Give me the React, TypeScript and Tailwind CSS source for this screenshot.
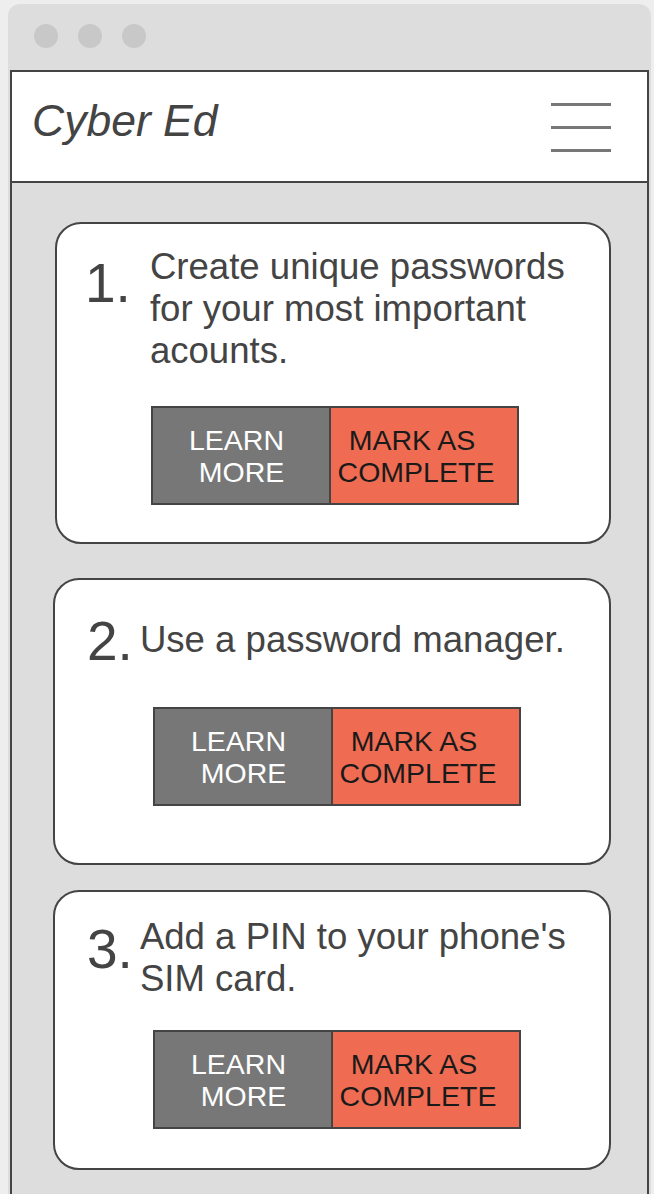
import React from 'react';

interface Step {
  num: string;
  lines: string[];
  cardClass: string;
  numClass: string;
  textClass: string;
  btnClass: string;
}

const steps: Step[] = [
  {
    num: '1.',
    lines: ['Create unique passwords', 'for your most important', 'acounts.'],
    cardClass: 'ml-[43px] h-[322px] pt-[22px]',
    numClass: 'mt-[10px] ml-[28px]',
    textClass: 'ml-[19px]',
    btnClass: 'mt-[34px] ml-[94px]',
  },
  {
    num: '2.',
    lines: ['Use a password manager.'],
    cardClass: 'ml-[41px] h-[287px] pt-[39px]',
    numClass: 'mt-[-5px] ml-[32px]',
    textClass: 'ml-[7px]',
    btnClass: 'mt-[38px] ml-[98px]',
  },
  {
    num: '3.',
    lines: ["Add a PIN to your phone's", 'SIM card.'],
    cardClass: 'ml-[41px] h-[280px] pt-[24px]',
    numClass: 'mt-[6px] ml-[32px]',
    textClass: 'ml-[7px]',
    btnClass: 'mt-[30px] ml-[98px]',
  },
];

function StepCard({ step }: { step: Step }) {
  return (
    <div className={`mr-[36px] bg-white border-2 border-[#444] rounded-[26px] ${step.cardClass}`}>
      <div className="flex items-start">
        <div className={`text-[55px] leading-[55px] text-[#444] shrink-0 ${step.numClass}`}>{step.num}</div>
        <div className={`text-[36.6px] leading-[42px] text-[#444] ${step.textClass}`}>
          {step.lines.map((l) => (
            <div key={l} className="whitespace-nowrap">{l}</div>
          ))}
        </div>
      </div>

      {/* buttons */}
      <div className={`flex w-[368px] h-[99px] border-2 border-[#444] text-[28.5px] leading-[32px] ${step.btnClass}`}>
        <div className="w-[178px] bg-[#777] border-r-2 border-[#444] text-white flex flex-col items-center justify-center pr-[9px]">
          <span>LEARN</span>
          <span className="ml-[10px]">MORE</span>
        </div>
        <div className="flex-1 bg-[#ef6c52] text-[#1a1a1a] flex flex-col items-center justify-center pr-[16px]">
          <span className="mr-[8px]">MARK AS</span>
          <span>COMPLETE</span>
        </div>
      </div>
    </div>
  );
}

export default function App() {
  return (
    <div className="min-h-[1194px] bg-[#eeeeee] pt-[4px] font-['Liberation_Sans',Arial,sans-serif] overflow-hidden">
      <div className="ml-[8px] mr-[3px] h-[1190px] bg-[#dddddd] rounded-t-[12px] flex flex-col">
        {/* title bar */}
        <div className="h-[66px] flex items-center gap-[20px] pl-[26px] pb-[2px] shrink-0">
          <div className="w-[24px] h-[24px] rounded-full bg-[#c8c8c8]" />
          <div className="w-[24px] h-[24px] rounded-full bg-[#c8c8c8]" />
          <div className="w-[24px] h-[24px] rounded-full bg-[#c8c8c8]" />
        </div>

        <div className="mx-[2px] flex-1 border-2 border-b-0 border-[#444] flex flex-col">
          {/* header */}
          <div className="h-[111px] bg-white border-b-2 border-[#444] flex items-start justify-between shrink-0">
            <div className="italic text-[44.5px] leading-[50px] text-[#444] ml-[20px] mt-[24px]">Cyber Ed</div>
            <div className="mr-[36px] mt-[31px] flex flex-col gap-[20px]">
              <div className="w-[60px] h-[3px] bg-[#777]" />
              <div className="w-[60px] h-[3px] bg-[#777]" />
              <div className="w-[60px] h-[3px] bg-[#777]" />
            </div>
          </div>

          {/* content */}
          <div className="flex flex-col pt-[39px]">
            <StepCard step={steps[0]} />
            <div className="h-[34px]" />
            <StepCard step={steps[1]} />
            <div className="h-[25px]" />
            <StepCard step={steps[2]} />
          </div>
        </div>
      </div>
    </div>
  );
}
